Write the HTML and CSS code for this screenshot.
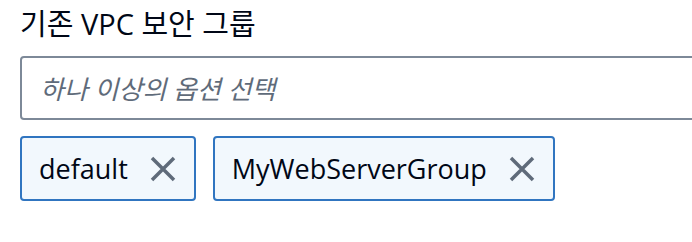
FILE: index.html
```html
<!DOCTYPE html>
<html lang="ko">
<head>
    <meta charset="UTF-8">
    <title>기존 VPC 보안 그룹</title>
    <link rel="stylesheet" href="styles.css">
</head>
<body>
    <div class="field">
        <label class="field-label">기존 VPC 보안 그룹</label>
        <div class="select-box">
            <span class="placeholder">하나 이상의 옵션 선택</span>
        </div>
        <div class="tokens">
            <div class="token">
                <span class="token-text">default</span>
                <svg class="token-close" viewBox="0 0 26 26" width="26" height="26">
                    <path d="M2 2 L24 24 M24 2 L2 24" />
                </svg>
            </div>
            <div class="token">
                <span class="token-text">MyWebServerGroup</span>
                <svg class="token-close" viewBox="0 0 26 26" width="26" height="26">
                    <path d="M2 2 L24 24 M24 2 L2 24" />
                </svg>
            </div>
        </div>
    </div>
</body>
</html>
```
FILE: styles.css
```css
* {
    margin: 0;
    padding: 0;
    box-sizing: border-box;
}

body {
    background-color: #ffffff;
    font-family: "Open Sans", "Noto Sans CJK KR", sans-serif;
    color: #000716;
    overflow: hidden;
}

.field {
    padding: 8px 0 0 20px;
}

.field-label {
    display: block;
    font-size: 29px;
    line-height: 32px;
    margin-bottom: 16px;
}

/* Multiselect trigger, runs off the right edge */
.select-box {
    width: 720px;
    height: 64px;
    border: 2px solid #7d8998;
    border-radius: 4px;
    display: flex;
    align-items: center;
    padding-left: 18px;
}

.placeholder {
    font-size: 26px;
    font-style: italic;
    color: #5f6b7a;
}

.tokens {
    display: flex;
    gap: 17px;
    margin-top: 16px;
}

.token {
    display: flex;
    align-items: center;
    height: 65px;
    padding: 0 18px 0 17px;
    background-color: #f2f8fd;
    border: 2px solid #3075c0;
    border-radius: 4px;
    gap: 22px;
}

.token-text {
    font-size: 27px;
    color: #000716;
}

.token-close path {
    stroke: #5f6b7a;
    stroke-width: 3.5;
    fill: none;
}
```
